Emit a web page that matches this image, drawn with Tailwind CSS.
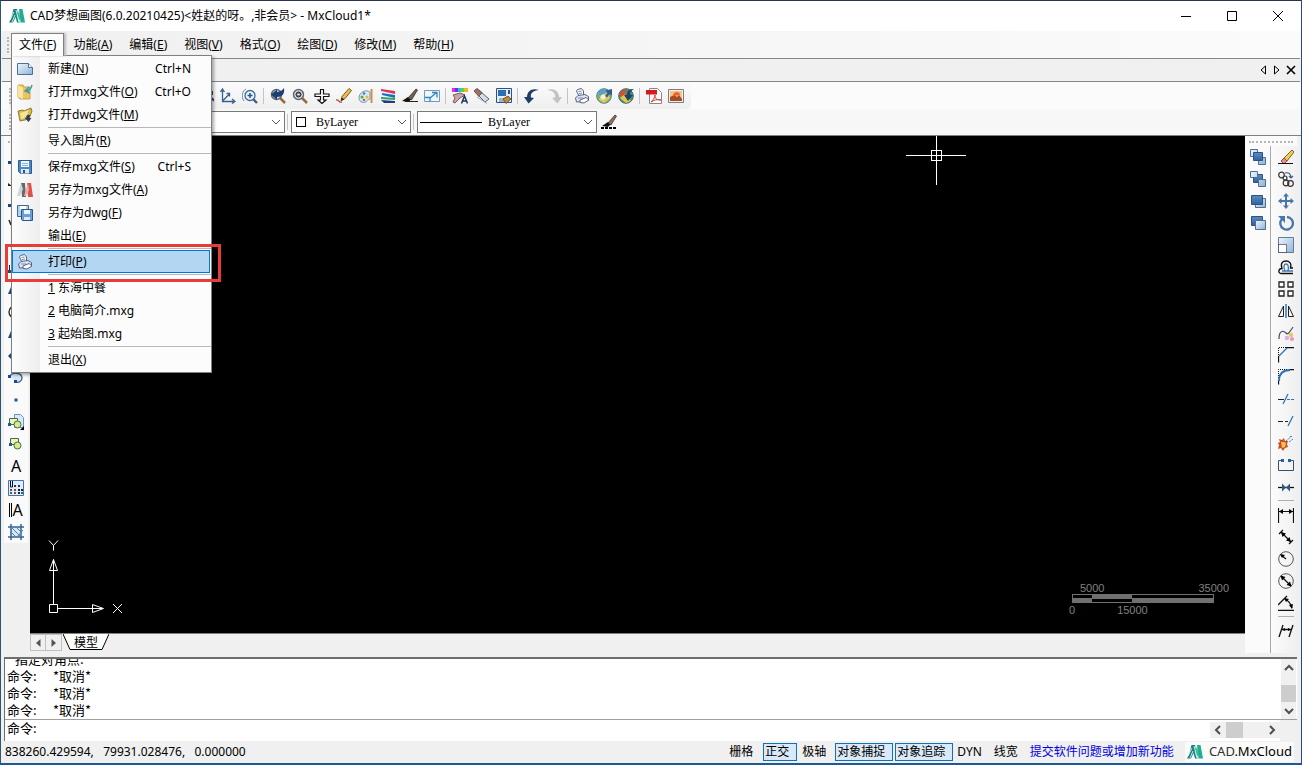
<!DOCTYPE html>
<html lang="zh-CN">
<head>
  <meta charset="UTF-8">
  <meta name="viewport" content="width=device-width, initial-scale=1.0">
  <title>CAD梦想画图</title>
  <script src="https://cdn.jsdelivr.net/npm/@tailwindcss/browser@4"></script>
</head>
<body class="h-screen flex flex-col overflow-hidden bg-[#f0f0f0] border-t border-x border-b-2 border-t-[#2a3352] border-l-[#2f5573] border-r-[#29497f] border-b-[#1b5a94] font-['Noto_Sans','Noto_Sans_CJK_SC',sans-serif] text-xs text-black">

  <!-- Shared symbols -->
  <svg class="absolute size-0">
    <defs>
      <linearGradient id="blueGrad" x1="0" y1="0" x2="1" y2="1"><stop offset="0" stop-color="#eef6fd"/><stop offset="1" stop-color="#8fb3da"/></linearGradient>
      <linearGradient id="darkGrad" x1="0" y1="0" x2="0" y2="1"><stop offset="0" stop-color="#5d8cc2"/><stop offset="1" stop-color="#31629e"/></linearGradient>
    </defs>
    <symbol id="logo" viewBox="0 0 16 16">
      <path d="M4.500 1h3.500l2.500 13.500H8L6.500 9 4 14.500H0l2-4z" fill="#12837c"/>
      <path d="M10 1h3.500l2.500 13.500h-4.500z" fill="#1fae8f"/>
      <path d="M7.500 8l2.500-5 1.500 7-2 4z" fill="#3bb99c"/>
      <path d="M1 12l4-8M3 14l3-7M7 2l3 12" stroke="#fff" stroke-width=".8"/>
    </symbol>
    <symbol id="printer" viewBox="0 0 16 16">
      <path d="M5 8L2.500 3l1-1.500 4-1L9.500 3v5z" fill="#fff" stroke="#56628a"/>
      <path d="M1.500 10L4 7.500l7-1 3.500 2v3l-4 2-8 .500z" fill="#dfe4f2" stroke="#56628a"/>
      <path d="M6 12l6-2.500 3 2.500-5 3-4-.500z" fill="#fff" stroke="#56628a"/>
      <path d="M4.500 3.500l3-.500M5 5.500l3-.500M4 10h5" stroke="#7c88ad" fill="none"/>
    </symbol>
    <symbol id="loupe" viewBox="0 0 16 16">
      <path d="M10 10l5 5" stroke="#9b6a3c" stroke-width="2.500"/>
      <circle cx="6.500" cy="6.500" r="5" fill="#d6dde6" stroke="#5d6672" stroke-width="1.500"/>
    </symbol>
    <symbol id="floppy" viewBox="0 0 16 16">
      <path d="M1.500 1.500h13v13H3.500l-2-2z" fill="#4f88c4" stroke="#2c5c94"/>
      <path d="M4 2h8v6H4z" fill="#f1f7fd"/>
      <path d="M4 10h8v4.500H4z" fill="#dce8f4"/><path d="M6 11h2v3H6z" fill="#28548c"/>
      <path d="M5 4.500h6M5 6.500h6" stroke="#8eb1d6"/>
    </symbol>
    <symbol id="down" viewBox="0 0 12 12"><path d="M2 4l4 4 4-4" fill="none" stroke="#555"/></symbol>
  </svg>

  <!-- Title bar -->
  <header class="flex h-[30px] shrink-0 items-center bg-white pl-2">
    <svg class="size-4"><use href="#logo"/></svg>
    <h1 class="ml-[5px] whitespace-nowrap">CAD梦想画图(6.0.20210425)&lt;姓赵的呀。,非会员&gt; - MxCloud1*</h1>
    <div class="ml-auto flex h-full">
      <button aria-label="最小化" class="grid w-[46px] place-items-center"><svg class="size-3" viewBox="0 0 12 12"><path d="M1 6.500h10" stroke="#000"/></svg></button>
      <button aria-label="最大化" class="grid w-[46px] place-items-center"><svg class="size-3" viewBox="0 0 12 12"><path d="M1.500 1.500h9v9h-9z" fill="none" stroke="#000"/></svg></button>
      <button aria-label="关闭" class="grid w-[46px] place-items-center"><svg class="size-3" viewBox="0 0 12 12"><path d="M1 1l10 10M11 1L1 11" stroke="#000"/></svg></button>
    </div>
  </header>

  <!-- Menu bar -->
  <nav class="relative z-10 flex h-[27px] shrink-0 gap-px bg-linear-to-r from-[#f0f0f0] to-[#fbfbfb] pt-[2px] pl-[6px]">
    <span class="mt-1 mr-px h-4 border-l-2 border-dotted border-[#b5b5b5]"></span>
    <div class="relative">
      <button class="relative z-20 h-[23px] border border-b-0 border-[#808080] bg-[#fcfcfc] px-[7px] shadow-[2px_0_2px_#bbb]">文件(<u>F</u>)</button>

      <div class="absolute top-[22px] left-0 w-[201px] border border-[#808080] bg-[#fcfcfc] bg-linear-to-r from-[#fcfcfc] to-[#eeeeee] bg-[length:28px_100%] bg-no-repeat py-px shadow-[2px_2px_3px_#0005]">
        <button class="flex h-[23px] w-full items-center pl-[5px] pr-5">
          <svg class="mr-[15px] size-4" viewBox="0 0 16 16"><path d="M.5 2.500h11l4 4v7H.500z" fill="url(#blueGrad)" stroke="#4c7199"/><path d="M11.500 2.500v4h4" fill="#fff" stroke="#4c7199"/></svg>
          <span>新建(<u>N</u>)</span><span class="ml-auto">Ctrl+N</span>
        </button>
        <button class="flex h-[23px] w-full items-center pl-[5px] pr-5">
          <svg class="mr-[15px] size-4" viewBox="0 0 16 16"><path d="M1 1h5l1 2h6v12H3l-2-2z" fill="#ecc45d" stroke="#c9a24a"/><path d="M1 1l5 3v11l-5-2z" fill="#f9e5a0"/><path d="M15 1c-1 4-3 6-6 6M12 3L8 7l5 2" fill="none" stroke="#3f9bb5" stroke-width="1.500"/></svg>
          <span>打开mxg文件(<u>O</u>)</span><span class="ml-auto">Ctrl+O</span>
        </button>
        <button class="flex h-[23px] w-full items-center pl-[5px] pr-5">
          <svg class="mr-[15px] size-4" viewBox="0 0 16 16"><path d="M1 4l5-1 1 1 7-3 1 3-3 8-9 2z" fill="#d9b83f" stroke="#8d7f3c"/><path d="M3 6l9-3-3 8-5 1z" fill="#f5e697"/><path d="M13.500 8.500c-2-2-5 0-4 2l-2 0 4 4.500 3-4h-2c0-1 0-2 1-2.500z" fill="#333c57"/></svg>
          <span>打开dwg文件(<u>M</u>)</span>
        </button>
        <hr class="my-px ml-9 border-[#b8b8b8]">
        <button class="flex h-[23px] w-full items-center pl-9">导入图片(<u>R</u>)</button>
        <hr class="my-px ml-9 border-[#b8b8b8]">
        <button class="flex h-[23px] w-full items-center pl-[5px] pr-5">
          <svg class="mr-[15px] size-4"><use href="#floppy"/></svg>
          <span>保存mxg文件(<u>S</u>)</span><span class="ml-auto">Ctrl+S</span>
        </button>
        <button class="flex h-[23px] w-full items-center pl-[5px] pr-5">
          <svg class="mr-[15px] size-4" viewBox="0 0 16 16"><path d="M4 1h4l1 14H5z" fill="#606a73"/><path d="M4 1L0 14h3l3-7z" fill="#cfd4d8"/><path d="M10 1h4l2 14h-5z" fill="#e0504a"/><path d="M11 1L7 14h2l3-6z" fill="#f3a7a0"/></svg>
          <span>另存为mxg文件(<u>A</u>)</span>
        </button>
        <button class="flex h-[23px] w-full items-center pl-[5px] pr-5">
          <svg class="mr-[15px] size-4" viewBox="0 0 16 16"><path d="M.5.500h11v11H.500z" fill="#b4d0ec" stroke="#3a6ca5"/><path d="M3 1h6v4H3z" fill="#fff"/><path d="M4.500 4.500h11v11h-10l-1-1z" fill="#6b9fd3" stroke="#28568d"/><path d="M7 5h6v4H7z" fill="#eef6fd"/><path d="M7 12h6v3H7z" fill="#dce8f4"/></svg>
          <span>另存为dwg(<u>F</u>)</span>
        </button>
        <button class="flex h-[23px] w-full items-center pl-9">输出(<u>E</u>)</button>
        <hr class="my-px ml-9 border-[#b8b8b8]">
        <div class="relative">
          <button class="flex h-[23px] w-[198px] items-center border border-[#0078d7] bg-[#b3d7f3] pl-1">
            <svg class="mr-[15px] size-4"><use href="#printer"/></svg>打印(<u>P</u>)
          </button>
          <!-- highlight frame -->
          <div class="pointer-events-none absolute -top-[6px] -left-[7px] h-[38px] w-[216px] border-3 border-[#e83c39]"></div>
        </div>
        <hr class="my-px ml-9 border-[#b8b8b8]">
        <button class="flex h-[23px] w-full items-center pl-9"><u>1</u>&nbsp;东海中餐</button>
        <button class="flex h-[23px] w-full items-center pl-9"><u>2</u>&nbsp;电脑简介.mxg</button>
        <button class="flex h-[23px] w-full items-center pl-9"><u>3</u>&nbsp;起始图.mxg</button>
        <hr class="my-px ml-9 border-[#b8b8b8]">
        <button class="flex h-[23px] w-full items-center pl-9">退出(<u>X</u>)</button>
      </div>
    </div>
    <button class="h-[23px] px-2">功能(<u>A</u>)</button>
    <button class="h-[23px] px-2">编辑(<u>E</u>)</button>
    <button class="h-[23px] px-2">视图(<u>V</u>)</button>
    <button class="h-[23px] px-2">格式(<u>O</u>)</button>
    <button class="h-[23px] px-2">绘图(<u>D</u>)</button>
    <button class="h-[23px] px-2">修改(<u>M</u>)</button>
    <button class="h-[23px] px-2">帮助(<u>H</u>)</button>
  </nav>

  <!-- Document tab strip -->
  <div class="mx-px flex h-6 shrink-0 items-center justify-end gap-[2px] border-y border-[#808a8a] bg-[#f0f0f0] pr-[3px]">
    <button aria-label="上一个"><svg class="size-3" viewBox="0 0 12 12"><path d="M8.500 2v8L4 6z" fill="none" stroke="#000"/></svg></button>
    <button aria-label="下一个"><svg class="size-3" viewBox="0 0 12 12"><path d="M3.500 2v8L8 6z" fill="none" stroke="#000"/></svg></button>
    <button aria-label="关闭标签"><svg class="size-3" viewBox="0 0 12 12"><path d="M2 2l8 8M10 2l-8 8" stroke="#000" stroke-width="1.600"/></svg></button>
  </div>

  <!-- Standard toolbar -->
  <div class="flex h-[27px] shrink-0 items-center bg-[#fbfbfb] pl-[8px]">
    <div class="flex h-full items-center rounded-r bg-linear-to-b from-[#fbfbfb] to-[#efefef] pr-1">
      <span class="mr-2 h-4 border-l-2 border-dotted border-[#b5b5b5]"></span>
      <span class="w-44"></span>
      <button aria-label="平移" class="grid h-[22px] w-[22px] place-items-center"><svg class="size-4" viewBox="0 0 16 16"><path d="M14 3v4M14 10l2 3" stroke="#24486f" stroke-width="2"/></svg></button>
      <button aria-label="坐标系" class="grid h-[22px] w-[22px] place-items-center"><svg class="size-4" viewBox="0 0 16 16" fill="none" stroke="#38618f" stroke-width="1.300"><path d="M2.500 2v11.500H14M2.500 13l7-7M.5 4l2-3 2 3M12 11l3 2.500-3 2M6.500 5.500h3v3"/></svg></button>
      <button aria-label="缩放" class="grid h-[22px] w-[22px] place-items-center"><svg class="size-4" viewBox="0 0 16 16" fill="none"><path d="M11 11l4 4" stroke="#3c5f8c" stroke-width="2.400"/><circle cx="8" cy="7.500" r="5" fill="#edf5fc" stroke="#44688f" stroke-width="1.300"/><path d="M5.500 7.500h5M8 5v5" stroke="#1d5899" stroke-width="1.500"/><path d="M2 13C-1 9 0 3 4 1" stroke="#6788a9"/></svg></button>
      <span class="mx-[2px] h-4 w-[2px] border-l border-[#c4c4c4]"></span>
      <button aria-label="上一视图" class="grid h-[22px] w-[22px] place-items-center"><svg class="size-4" viewBox="0 0 16 16"><use href="#loupe"/><path d="M1 6.500l6-5v2.500c3-.500 5-1 7-4 1 6-2 9-7 9v3z" fill="#1e3f72"/></svg></button>
      <button aria-label="实时缩放" class="grid h-[22px] w-[22px] place-items-center"><svg class="size-4" viewBox="0 0 16 16"><use href="#loupe"/><circle cx="6.500" cy="6.500" r="2.500" fill="#7c8188" stroke="#222"/><path d="M5.500 6.500h2" stroke="#fff"/></svg></button>
      <button aria-label="移动视图" class="grid h-[22px] w-[22px] place-items-center"><svg class="size-4" viewBox="0 0 16 16"><path d="M6.500 6V1.500h3V6H15v2.500H9.500V12H12l-4 3.500L4 12h2.500V8.500H1V6z" fill="#fff" stroke="#111" stroke-width="1.200"/></svg></button>
      <button aria-label="铅笔" class="grid h-[22px] w-[22px] place-items-center"><svg class="size-4" viewBox="0 0 16 16"><path d="M0 12c3-1 2 3 6 2" fill="none" stroke="#c83e36" stroke-width="1.300"/><path d="M5 12.500l1-4L13 .500l2.500 2L9 10.500z" fill="#eebd4f" stroke="#795628"/><path d="M5 13l.800-3.500 2.500 2z" fill="#222"/></svg></button>
      <button aria-label="颜色" class="grid h-[22px] w-[22px] place-items-center"><svg class="size-4" viewBox="0 0 16 16"><path d="M12 4C8 1 1 4 1 10c0 5 6 5 7 4s1-2 4-3z" fill="#d9e9f3" stroke="#7798ae"/><circle cx="4" cy="9" r="1.500" fill="#4fad49"/><circle cx="6" cy="5.500" r="1.300" fill="#3a80ca"/><circle cx="6" cy="12" r="1.300" fill="#d65550"/><circle cx="9" cy="9" r="1.500" fill="#e3b73e"/><path d="M13.500 1v14" stroke="#d98b4b" stroke-width="2"/></svg></button>
      <button aria-label="图层" class="grid h-[22px] w-[22px] place-items-center"><svg class="size-4" viewBox="0 0 16 16"><path d="M0 0h16v16H0z" fill="#f2f6fa"/><path d="M1 1l14 2v3L1 3z" fill="#d73855"/><path d="M2 5l13 2v3L2 7z" fill="#246cbe"/><path d="M1 9l14 1v2L1 11z" fill="#28a46c"/><path d="M1 12l14 1v2H4z" fill="#273b76"/></svg></button>
      <button aria-label="画刷" class="grid h-[22px] w-[22px] place-items-center"><svg class="size-4" viewBox="0 0 16 16"><path d="M0 13l6-4 3 2-2 3z" fill="#111"/><path d="M6 10l8-9 1.500 1-6 10z" fill="#765f4c" stroke="#222" stroke-width=".7"/><path d="M3 13.500h13" stroke="#222"/></svg></button>
      <button aria-label="全屏" class="grid h-[22px] w-[22px] place-items-center"><svg class="size-4" viewBox="0 0 16 16"><path d="M.5 2.500h15v11H.500z" fill="#edf6fc" stroke="#6f9cbd"/><path d="M1 9.500h5v4M6 10l6-5M8 4.500h5v5" fill="none" stroke="#3783b7" stroke-width="1.300"/></svg></button>
      <span class="mx-[2px] h-4 w-[2px] border-l border-[#c4c4c4]"></span>
      <button aria-label="文字颜色" class="grid h-[22px] w-[22px] place-items-center"><svg class="size-4" viewBox="0 0 16 16"><path d="M0 0h3v4H0z" fill="#f12ad3"/><path d="M3 0h3v4H3z" fill="#5a38ee"/><path d="M6 0h3v4H6z" fill="#25bdea"/><path d="M9 0h3v4H9z" fill="#63d13b"/><path d="M12 0h4v4h-4z" fill="#f3b524"/><path d="M1 7l7-2 5 2-5 3-5 5-2-1 2-4z" fill="#d3a2a0" stroke="#77575d"/><path d="M9.500 15.500L12.500 8l3 7.500M10.500 13h4" fill="none" stroke="#1e3564" stroke-width="1.500"/></svg></button>
      <button aria-label="刷子" class="grid h-[22px] w-[22px] place-items-center"><svg class="size-4" viewBox="0 0 16 16"><path d="M0 3l3-2.500 5 4-3 4z" fill="#9e6f66" stroke="#69504e"/><path d="M5 8l3-3 7 6-4 3z" fill="#d6dee6" stroke="#596575"/><path d="M3 9l10 6.500" stroke="#9da6b1"/></svg></button>
      <button aria-label="保存" class="grid h-[22px] w-[22px] place-items-center"><svg class="size-4" viewBox="0 0 16 16"><path d="M.5.500h15v14H.500z" fill="#e6f0fa" stroke="#28548c"/><path d="M2 2h8v6H2z" fill="#2e6eb1"/><path d="M12 2h2v4h-2z" fill="#28548c"/><path d="M3 10h5v4H3z" fill="#98b6d4"/><path d="M7 11l5-3 3 3-5 4.500z" fill="#c18c32" stroke="#735226"/></svg></button>
      <span class="mx-[2px] h-4 w-[2px] border-l border-[#c4c4c4]"></span>
      <button aria-label="撤销" class="grid h-[22px] w-[22px] place-items-center"><svg class="size-4" viewBox="0 0 16 16"><path d="M0 9l4.500 6.500L10 10l-3-.5C6 5 9 3 15 2 8-.5 3 3 3 9z" fill="#1f3d6b"/></svg></button>
      <button aria-label="重做" class="grid h-[22px] w-[22px] place-items-center"><svg class="size-4" viewBox="0 0 16 16"><path d="M16 9l-4.500 6.500L6 10l3-.5C10 5 7 3 1 2c7-2.500 12 1 12 7z" fill="#c3c3c3"/></svg></button>
      <span class="mx-[2px] h-4 w-[2px] border-l border-[#c4c4c4]"></span>
      <button aria-label="打印" class="grid h-[22px] w-[22px] place-items-center"><svg class="size-4"><use href="#printer"/></svg></button>
      <button aria-label="上传" class="grid h-[22px] w-[22px] place-items-center"><svg class="size-4" viewBox="0 0 16 16"><circle cx="8" cy="8" r="7.300" fill="#80b75a" stroke="#4e7d9d"/><path d="M2 5c4-5 9-4 10-2L5 8z" fill="#5ba0d0"/><path d="M3 12c1-4 5-7 8-7l3 5-6 5z" fill="#e7c756"/><path d="M9 8l2.500-3-2-2.500L16 1v6.500L13.500 6 11 9.500z" fill="#315c91"/><circle cx="7" cy="9" r="2.500" fill="#e9f2ec"/></svg></button>
      <button aria-label="下载" class="grid h-[22px] w-[22px] place-items-center"><svg class="size-4" viewBox="0 0 16 16"><circle cx="8" cy="8" r="7.300" fill="#4e9b58" stroke="#38657f"/><path d="M1 7c3-6 6-6 8-5L5 9z" fill="#d84e33"/><path d="M2 10l5-4 6 7-5 2z" fill="#e8c348"/><path d="M16 1c-5 0-7 2-7 5.500L6 7l4 6 5-6-3-.500c0-2 1-4 4-5.500z" fill="#214271"/></svg></button>
      <span class="mx-[2px] h-4 w-[2px] border-l border-[#c4c4c4]"></span>
      <button aria-label="导出PDF" class="grid h-[22px] w-[22px] place-items-center"><svg class="size-4" viewBox="0 0 16 16"><path d="M3.500.500h8l4 4v11h-12z" fill="#fff" stroke="#888"/><path d="M0 2h11v4.500H0z" fill="#d7191f"/><path d="M5 14c3-3 4-5 4-7 0 4 2 5 6 5-4-1-7 0-10 2z" fill="none" stroke="#d43a32"/></svg></button>
      <button aria-label="导出图片" class="grid h-[22px] w-[22px] place-items-center"><svg class="size-4" viewBox="0 0 16 16"><path d="M.5 1.500h15v13H.500z" fill="#f7efe5" stroke="#7e7e7e"/><path d="M2 3h12v10H2z" fill="#f4c58b"/><path d="M2 13V9l4-2 3 2 2-2 3 4v2z" fill="#a54b27"/><path d="M5 8c0-5 7-5 7-1z" fill="#e8652b"/></svg></button>
    </div>
  </div>

  <!-- Properties toolbar -->
  <div class="flex h-[27px] shrink-0 items-center border-b border-[#808080] bg-[#f7f7f7] pl-[8px]">
    <span class="mr-2 h-4 border-l-2 border-dotted border-[#b5b5b5]"></span>
    <label class="flex h-[22px] w-[266px] items-center border border-[#7a7a7a] bg-white pr-[2px]">
      <select aria-label="图层" class="min-w-0 flex-1 appearance-none outline-none"><option></option></select><svg class="size-3"><use href="#down"/></svg>
    </label>
    <span class="mx-[2px] h-4 w-[2px] border-l border-[#c4c4c4]"></span>
    <label class="flex h-[22px] w-[120px] items-center border border-[#7a7a7a] bg-white pr-[2px] pl-1 font-['Liberation_Serif',serif]">
      <span class="mr-[10px] size-[10px] border border-black"></span>
      <select aria-label="颜色" class="min-w-0 flex-1 appearance-none outline-none"><option>ByLayer</option></select><svg class="size-3"><use href="#down"/></svg>
    </label>
    <span class="mx-[2px] h-4 w-[2px] border-l border-[#c4c4c4]"></span>
    <label class="flex h-[22px] w-[180px] items-center border border-[#7a7a7a] bg-white pr-[2px] pl-[2px] font-['Liberation_Serif',serif]">
      <span class="mr-[6px] h-px w-[62px] bg-black"></span>
      <select aria-label="线型" class="min-w-0 flex-1 appearance-none outline-none"><option>ByLayer</option></select><svg class="size-3"><use href="#down"/></svg>
    </label>
    <button aria-label="线宽" class="ml-[3px] grid size-[18px] place-items-center"><svg class="size-4" viewBox="0 0 16 16"><path d="M1 12l6-4 3 2-3 3z" fill="#111"/><path d="M7 9l7-8 1.500 1-5.500 9z" fill="#9a6e57" stroke="#222" stroke-width=".7"/><path d="M0 14h16" stroke="#000" stroke-width="2" stroke-dasharray="3 1"/></svg></button>
  </div>

  <!-- Workspace -->
  <main class="flex min-h-0 flex-1">
    <!-- Draw tools -->
    <aside class="flex w-[29px] shrink-0 flex-col bg-[#f0f0f0] pr-[2px] pl-[3px]">
      <div class="flex h-[407px] flex-col items-center bg-[#fafafa] pt-[5px]">
        <span class="mb-1 w-4 border-t-2 border-dotted border-[#b5b5b5]"></span>
        <button aria-label="直线" class="grid size-[22px] place-items-center"><svg class="size-4" viewBox="0 0 16 16"><path d="M0 11h3v3H0z" fill="#174a7d"/></svg></button>
        <button aria-label="构造线" class="grid size-[22px] place-items-center"><svg class="size-4" viewBox="0 0 16 16"><path d="M0 11l4 3H0z" fill="#222"/></svg></button>
        <button aria-label="多段线" class="grid size-[22px] place-items-center"><svg class="size-4" viewBox="0 0 16 16"><path d="M0 10h3v3H0z" fill="#174a7d"/></svg></button>
        <button aria-label="多边形" class="grid size-[22px] place-items-center"><svg class="size-4" viewBox="0 0 16 16"><path d="M1 4l2 5" stroke="#222" stroke-width="1.500"/></svg></button>
        <button aria-label="正多边形" class="grid size-[22px] place-items-center"></button>
        <button aria-label="矩形" class="grid size-[22px] place-items-center"><svg class="size-4" viewBox="0 0 16 16"><path d="M1.500 5v6h10" fill="none" stroke="#222"/><path d="M0 10h3v3H0z" fill="#174a7d"/></svg></button>
        <button aria-label="圆弧" class="grid size-[22px] place-items-center"><svg class="size-4" viewBox="0 0 16 16"><path d="M0 12l3-7v7z" fill="#174a7d"/></svg></button>
        <button aria-label="圆" class="grid size-[22px] place-items-center"><svg class="size-4" viewBox="0 0 16 16"><circle cx="7" cy="8" r="6" fill="none" stroke="#222" stroke-width="1.300"/></svg></button>
        <button aria-label="样条" class="grid size-[22px] place-items-center"><svg class="size-4" viewBox="0 0 16 16"><path d="M0 12l3-7v7z" fill="#174a7d"/></svg></button>
        <button aria-label="椭圆" class="grid size-[22px] place-items-center"><svg class="size-4" viewBox="0 0 16 16"><path d="M0 8l3-3v6z" fill="#174a7d"/></svg></button>
        <button aria-label="椭圆弧" class="grid size-[22px] place-items-center"><svg class="size-4" viewBox="0 0 16 16"><path d="M2 6c3-5 12-3 12 2 0 3-3 5-6 4" fill="#d6e4f3" stroke="#3e6289" stroke-width="1.300"/><path d="M0 5h3v3H0zM6 10h3v3H6z" fill="#174a9d"/></svg></button>
        <button aria-label="点" class="grid size-[22px] place-items-center"><svg class="size-4" viewBox="0 0 16 16"><path d="M6.500 6.500h3v3h-3z" fill="#175a9d"/></svg></button>
        <button aria-label="插入块" class="grid size-[22px] place-items-center"><svg class="size-4" viewBox="0 0 16 16"><path d="M6.500.500h6l3 3v10h-9z" fill="#d8e8f8" stroke="#6a94c2"/><path d="M1.500 4.500h8v6h-8z" fill="#f5f5a0" stroke="#3a6686"/><circle cx="9.500" cy="10.500" r="3.500" fill="#dce98a" stroke="#40734c"/><path d="M0 9h3v3H0z" fill="#175a9d"/><path d="M16 12v4h-4z"/></svg></button>
        <button aria-label="创建块" class="grid size-[22px] place-items-center"><svg class="size-4" viewBox="0 0 16 16"><path d="M2.500 2.500h8v6h-8z" fill="#f5f5a0" stroke="#3a6686"/><circle cx="9.500" cy="9.500" r="3.500" fill="#dce98a" stroke="#40734c"/><path d="M1 7h3v3H1z" fill="#175a9d"/></svg></button>
        <button aria-label="单行文字" class="grid size-[22px] place-items-center text-base leading-none">A</button>
        <button aria-label="表格" class="grid size-[22px] place-items-center"><svg class="size-4" viewBox="0 0 16 16"><path d="M.5.500h15v15H.500z" fill="#e1edfa" stroke="#4574ac"/><path d="M2.500 1v6h2V1" fill="none" stroke="#111"/><path d="M6 6h2M10 6h2" stroke="#243a66" stroke-width="2"/><path d="M2 10h2M6 13h2" stroke="#bf2d3f" stroke-width="2"/><path d="M6 10h2M13 13h2M2 13h2" stroke="#287648" stroke-width="2"/><path d="M10 10h2M13 10h2M10 13h2" stroke="#222" stroke-width="2"/></svg></button>
        <button aria-label="多行文字" class="flex size-[22px] items-center justify-center text-base leading-none"><span class="h-[14px] w-[3px] border-x border-black"></span>A</button>
        <button aria-label="填充" class="grid size-[22px] place-items-center"><svg class="size-4" viewBox="0 0 16 16"><path d="M3 3h10v10H3z" fill="#d6e8f6"/><path d="M0 3h16M0 13h16M3 0v16M13 0v16" stroke="#33648f" stroke-width="1.500"/><path d="M3 8l5 5M3 3l10 10M8 3l5 5M9 13l6-7" stroke="#5382a9"/></svg></button>
      </div>
    </aside>

    <!-- Drawing area -->
    <section class="flex min-w-0 flex-1 flex-col">
      <div class="relative flex-1 border-b border-[#808080] bg-black">
        <svg class="absolute top-0 left-[876px] h-[50px] w-[61px]" viewBox="0 0 61 50" fill="none" stroke="#fff" shape-rendering="crispEdges"><path d="M0 19.500h60M30.500 0v49M25.500 14.500h10v10h-10z"/></svg>
        <svg class="absolute bottom-[18px] left-[17px] h-[76px] w-[80px]" viewBox="0 0 80 76" fill="none" stroke="#fff"><path d="M2 1.500l4.500 5 4.500-5M6.500 6.500v5M6.500 65V20.500M2.500 31.500l4-11 4 11zM2.500 65.500h8v8h-8zM10.500 69.500h45M45.500 65.500l11 4-11 4zM66 65l9 9M75 65l-9 9"/></svg>
        <div class="absolute right-4 bottom-[17px] w-[157px] font-['Liberation_Sans',sans-serif] text-[11px] leading-3 text-[#808080]">
          <div class="flex justify-between pl-2"><span>5000</span><span>35000</span></div>
          <svg class="h-[10px] w-[143px]" viewBox="0 0 143 10" shape-rendering="crispEdges"><path d="M.5.500h141v8H.500z" fill="none" stroke="#707070"/><path d="M0 4h20v5H0zM20 0h40v5H20zM60 4h82v5H60z" fill="#707070"/></svg>
          <div class="-ml-[3px] flex gap-[42px]"><span>0</span><span>15000</span></div>
        </div>
      </div>
      <div class="flex h-[19px] shrink-0 items-stretch bg-[#f0f0f0] pb-[2px]">
        <button aria-label="向左" class="grid w-4 place-items-center border border-[#c0c0c0]"><svg class="size-2" viewBox="0 0 8 8"><path d="M6.500 0v8L2 4z" fill="#555"/></svg></button>
        <button aria-label="向右" class="grid w-4 place-items-center border border-l-0 border-[#c0c0c0]"><svg class="size-2" viewBox="0 0 8 8"><path d="M1.500 0v8L6 4z" fill="#555"/></svg></button>
        <button class="relative ml-px w-[46px]">
          <svg class="absolute inset-0 h-4 w-[46px]" viewBox="0 0 46 16"><path d="M0 0l7 15.500h32L46 0z" fill="#fff"/><path d="M0 0l7 15.500h32L46 0" stroke="#000" fill="none"/></svg>
          <span class="relative">模型</span>
        </button>
      </div>
    </section>

    <!-- Draw order + modify tools -->
    <aside class="mr-1 flex w-13 shrink-0 flex-col bg-[#fbfbfb] pt-[5px]">
      <span class="mx-1 mb-[3px] border-t-2 border-dotted border-[#b5b5b5]"></span>
      <div class="flex min-h-0 flex-1">
        <div class="flex w-[27px] flex-col items-center border-r border-[#a8a8a8]">
          <button aria-label="前置" class="grid size-[22px] place-items-center"><svg class="size-4" viewBox="0 0 16 16"><path d="M.5.500h7v7h-7zM8.500 8.500h7v7h-7z" fill="url(#blueGrad)" stroke="#4e6f95"/><path d="M3.500 3.500h9v8h-9z" fill="url(#darkGrad)" stroke="#2d5280"/></svg></button>
          <button aria-label="后置" class="grid size-[22px] place-items-center"><svg class="size-4" viewBox="0 0 16 16"><path d="M3.500 3.500h9v8h-9z" fill="url(#darkGrad)" stroke="#2d5280"/><path d="M.5.500h7v6h-7zM8.500 8.500h7v7h-7z" fill="url(#blueGrad)" stroke="#4e6f95"/></svg></button>
          <button aria-label="置于对象之上" class="grid size-[22px] place-items-center"><svg class="size-4" viewBox="0 0 16 16"><path d="M5.500 5.500h10v9h-10z" fill="url(#blueGrad)" stroke="#4e6f95"/><path d="M1.500 2.500h11v9h-11z" fill="url(#darkGrad)" stroke="#2d5280"/></svg></button>
          <button aria-label="置于对象之下" class="grid size-[22px] place-items-center"><svg class="size-4" viewBox="0 0 16 16"><path d="M1.500 1.500h11v9h-11z" fill="url(#darkGrad)" stroke="#2d5280"/><path d="M5.500 5.500h10v9h-10z" fill="url(#blueGrad)" stroke="#4e6f95"/></svg></button>
        </div>
        <div class="flex flex-1 flex-col items-center bg-linear-to-r from-[#fbfbfb] to-[#f0f0f0] pl-1">
          <button aria-label="删除" class="grid size-[22px] place-items-center"><svg class="size-4" viewBox="0 0 16 16"><path d="M6 9l8-8 2 2-7 9z" fill="#f0cd53" stroke="#7d6123"/><path d="M3 12l3-3 3 3-3 3z" fill="#e88e8b" stroke="#a14942"/><path d="M0 14.500h15" stroke="#111"/></svg></button>
          <button aria-label="复制" class="grid size-[22px] place-items-center"><svg class="size-4" viewBox="0 0 16 16" fill="none" stroke="#333" stroke-width="1.200"><circle cx="3.500" cy="4" r="2.800"/><circle cx="7" cy="7" r="2"/><circle cx="8" cy="12" r="2.800"/><circle cx="12.500" cy="12.500" r="2.800"/><path d="M7 2c4-1 6 1 6 5M11 5l2 2 2-2" stroke="#3c5c82"/></svg></button>
          <button aria-label="移动" class="grid size-[22px] place-items-center"><svg class="size-4" viewBox="0 0 16 16"><path d="M8 0l3 3.500H9V7h3.500V5L16 8l-3.500 3V9H9v3.500h2L8 16l-3-3.500h2V9H3.500v2L0 8l3.500-3v2H7V3.500H5z" fill="#4777a9"/></svg></button>
          <button aria-label="旋转" class="grid size-[22px] place-items-center"><svg class="size-4" viewBox="0 0 16 16"><path d="M4 4a6.300 6.300 0 1 0 5-2" fill="none" stroke="#4878a9" stroke-width="2.300"/><path d="M0 1h7v7z" fill="#4878a9"/></svg></button>
          <button aria-label="缩放" class="grid size-[22px] place-items-center"><svg class="size-4" viewBox="0 0 16 16"><path d="M.5.500h15v15H.500z" fill="url(#blueGrad)" stroke="#607d9b"/><path d="M.5 7.500h8v8h-8z" fill="#fff" stroke="#111" stroke-dasharray="1 1"/></svg></button>
          <button aria-label="偏移" class="grid size-[22px] place-items-center"><svg class="size-4" viewBox="0 0 16 16" fill="none"><path d="M15 14.500H3c-3 0-3-5 1-5C2 4 5 2 8 2s6 2 4.500 7H15" stroke="#111" stroke-width="1.300"/><path d="M15 12H4h3c-2-4-1-7 1-7s3 2 2 7" stroke="#3b77b7" stroke-width="1.300"/></svg></button>
          <button aria-label="阵列" class="grid size-[22px] place-items-center"><svg class="size-4" viewBox="0 0 16 16" fill="#fff" stroke="#222" stroke-width="1.300"><path d="M1 1h5v5H1zM10 1h5v5h-5zM1 10h5v5H1zM10 10h5v5h-5z"/></svg></button>
          <button aria-label="镜像" class="grid size-[22px] place-items-center"><svg class="size-4" viewBox="0 0 16 16" fill="none" stroke="#222"><path d="M5.500 3v10.500H.500zM10.500 3v10.500h5z"/><path d="M8 1v14" stroke="#2a7ac4" stroke-width="1.500"/></svg></button>
          <button aria-label="编辑曲线" class="grid size-[22px] place-items-center"><svg class="size-4" viewBox="0 0 16 16"><path d="M1 14c0-10 5-8 7-6s3 0 7-6" fill="none" stroke="#4a5471" stroke-width="1.300"/><circle cx="9" cy="13" r="2.300" fill="#d9b3dc"/><circle cx="13" cy="10" r="2.300" fill="#efc75c"/><circle cx="14" cy="14" r="2" fill="#e398ba"/></svg></button>
          <button aria-label="倒角" class="grid size-[22px] place-items-center"><svg class="size-4" viewBox="0 0 16 16" fill="none"><path d="M.5 15.500V9M8 .500h8" stroke="#111" stroke-width="1.300"/><path d="M.5 8V.500H8" stroke="#111" stroke-dasharray="1 1"/><path d="M1 9l8-8" stroke="#2d73b8" stroke-width="1.300"/></svg></button>
          <button aria-label="圆角" class="grid size-[22px] place-items-center"><svg class="size-4" viewBox="0 0 16 16" fill="none"><path d="M.5 15.500V11M11 .500h5" stroke="#111" stroke-width="1.300"/><path d="M.5 9V.500H9" stroke="#111" stroke-dasharray="1 1"/><path d="M1 12C1 5 5 1 12 1" stroke="#2d73b8" stroke-width="1.800"/></svg></button>
          <button aria-label="修剪" class="grid size-[22px] place-items-center"><svg class="size-4" viewBox="0 0 16 16" fill="none"><path d="M0 8.500h6" stroke="#222"/><path d="M5 13l5-10" stroke="#2d73b8" stroke-width="1.300"/><path d="M9 8.500h7" stroke="#2d73b8" stroke-dasharray="3 1"/></svg></button>
          <button aria-label="延伸" class="grid size-[22px] place-items-center"><svg class="size-4" viewBox="0 0 16 16" fill="none"><path d="M0 8.500h5M7 8.500h3" stroke="#222"/><path d="M10 13l5-10" stroke="#2d73b8" stroke-width="1.300"/></svg></button>
          <button aria-label="分解" class="grid size-[22px] place-items-center"><svg class="size-4" viewBox="0 0 16 16"><path d="M1 4l3 1 2-2 1 3 3 0-1 3 1 3-3 1-2 3-2-3-3 1 1-4-1-2 2-1z" fill="#c94f2a"/><path d="M3 7l3 0 2 1-1 4-3 1z" fill="#f4c54a"/><path d="M8 6l6-5M11 7l4-3M12 2l1-1" stroke="#4e7bb1" stroke-dasharray="2 1"/></svg></button>
          <button aria-label="打断" class="grid size-[22px] place-items-center"><svg class="size-4" viewBox="0 0 16 16"><path d="M4 3.500H.500v10h15v-10H12" fill="none" stroke="#38506c"/><path d="M3 2h3v3H3zM10 2h3v3h-3z" fill="#1d62ae"/></svg></button>
          <button aria-label="合并" class="grid size-[22px] place-items-center"><svg class="size-4" viewBox="0 0 16 16"><path d="M0 8.500h16" stroke="#111" stroke-width="1.300"/><path d="M4 4.500l4 4-4 4zM12 4.500l-4 4 4 4z" fill="#31587f"/></svg></button>
          <span class="my-[2px] h-[2px] w-4 border-t border-[#b0b0b0]"></span>
          <button aria-label="线性标注" class="grid size-[22px] place-items-center"><svg class="size-4" viewBox="0 0 16 16"><path d="M.5 1v15M15.500 1v15M1 4.500h14" stroke="#111" stroke-width="1.200"/><path d="M1 4.500L5 2v5zM15 4.500L11 2v5z"/></svg></button>
          <button aria-label="对齐标注" class="grid size-[22px] place-items-center"><svg class="size-4" viewBox="0 0 16 16"><path d="M1 5l4-4M11 15l4-4M3 3l10 10" stroke="#111" stroke-width="1.300"/><path d="M3 3l5 1.500L4.500 8zM13 13l-5-1.500L11.500 8z"/></svg></button>
          <button aria-label="半径标注" class="grid size-[22px] place-items-center"><svg class="size-4" viewBox="0 0 16 16"><circle cx="8" cy="8" r="7.300" fill="none" stroke="#555"/><path d="M3 4l5 4" stroke="#111" stroke-width="1.300"/><path d="M2 3l5 1-3 3z"/></svg></button>
          <button aria-label="直径标注" class="grid size-[22px] place-items-center"><svg class="size-4" viewBox="0 0 16 16"><circle cx="8" cy="8" r="7.300" fill="none" stroke="#555"/><path d="M3 3l10 10" stroke="#111" stroke-width="1.300"/><path d="M2.500 2.500l5 1.500L4 7.500zM13.500 13.500l-5-1.500L12 8.500z"/></svg></button>
          <button aria-label="角度标注" class="grid size-[22px] place-items-center"><svg class="size-4" viewBox="0 0 16 16"><path d="M0 10l9-9M0 15.300h16M7 4c4 2 6 5 7 9" fill="none" stroke="#111" stroke-width="1.300"/><path d="M6 3l5 1-3 3zM14 14l-3-4 4-1z"/></svg></button>
          <span class="my-[2px] h-[2px] w-4 border-t border-[#b0b0b0]"></span>
          <button aria-label="编辑标注" class="grid size-[22px] place-items-center"><svg class="size-4" viewBox="0 0 16 16"><path d="M1 14L5 2M11 14l4-12M4 6.500h9" stroke="#111" stroke-width="1.300"/><path d="M4 6.500L7 5v3zM13 6.500L10 5v3z"/></svg></button>
        </div>
      </div>
    </aside>
  </main>

  <!-- Command window -->
  <section class="mr-1 ml-[3px] mt-1 shrink-0 border-t-2 border-l border-[#6e6e6e] bg-white font-['Noto_Sans_CJK_SC',sans-serif] text-[13px]">
    <div class="flex h-[61px] border-b border-[#a0a0a0]">
      <div class="flex flex-1 flex-col justify-end overflow-hidden pb-px pl-[2px] leading-[17px]">
        <p class="pl-2">指定对角点:</p>
        <p class="flex"><span class="w-[46px]">命令:</span>*取消*</p>
        <p class="flex"><span class="w-[46px]">命令:</span>*取消*</p>
        <p class="flex"><span class="w-[46px]">命令:</span>*取消*</p>
      </div>
      <div class="mr-px flex w-[15px] flex-col items-center bg-[#f0f0f0]">
        <button aria-label="向上滚动" class="grid h-[26px] place-items-center pb-2"><svg class="size-[10px]" viewBox="0 0 10 10"><path d="M1 7l4-4 4 4" fill="none" stroke="#505050" stroke-width="2"/></svg></button>
        <span class="h-[17px] w-full bg-[#cdcdcd]"></span>
        <button aria-label="向下滚动" class="mt-auto grid h-4 place-items-center"><svg class="size-[10px]" viewBox="0 0 10 10"><path d="M1 3l4 4 4-4" fill="none" stroke="#505050" stroke-width="2"/></svg></button>
      </div>
    </div>
    <div class="flex h-[21px] pl-[2px]">
      <label for="commandInput" class="leading-4">命令:</label>
      <input id="commandInput" type="text" class="min-w-0 flex-1 px-1 outline-none">
      <div class="mt-[2px] flex h-4 w-[70px] items-center bg-[#f0f0f0]">
        <button aria-label="向左滚动" class="grid w-4 place-items-center"><svg class="size-[10px]" viewBox="0 0 10 10"><path d="M7 1L3 5l4 4" fill="none" stroke="#505050" stroke-width="2"/></svg></button>
        <span class="h-full w-[17px] bg-[#cdcdcd]"></span>
        <button aria-label="向右滚动" class="ml-auto grid w-4 place-items-center"><svg class="size-[10px]" viewBox="0 0 10 10"><path d="M3 1l4 4-4 4" fill="none" stroke="#505050" stroke-width="2"/></svg></button>
      </div>
      <span class="w-[17px] bg-[#f0f0f0]"></span>
    </div>
  </section>

  <!-- Status bar -->
  <footer class="flex h-[22px] shrink-0 items-center bg-[#f0f0f0] pr-[7px] pl-1 whitespace-nowrap">
    <span class="whitespace-pre">838260.429594,   79931.028476,   0.000000</span>
    <div class="ml-auto flex items-center">
      <button class="px-[5px]">栅格</button>
      <button class="ml-[5px] h-[18px] w-[34px] border border-[#0f6fb8] bg-[#d9e9f7] pl-px text-left leading-4">正交</button>
      <button class="px-[5px]">极轴</button>
      <button class="ml-1 h-[18px] w-[58px] border border-[#0f6fb8] bg-[#d9e9f7] pl-px text-left leading-4">对象捕捉</button>
      <button class="ml-[2px] h-[18px] w-[58px] border border-[#0f6fb8] bg-[#d9e9f7] pl-px text-left leading-4">对象追踪</button>
      <button class="px-1">DYN</button>
      <button class="ml-1 px-1">线宽</button>
      <a href="#" class="ml-2 text-[#0000e6]">提交软件问题或增加新功能</a>
      <div class="ml-[11px] flex h-5 items-center gap-[6px] bg-[#fafafa] px-[2px] text-[13px]"><svg class="size-4"><use href="#logo"/></svg><span><span class="text-[#333]">CAD</span>.MxCloud</span></div>
    </div>
  </footer>
</body>
</html>
